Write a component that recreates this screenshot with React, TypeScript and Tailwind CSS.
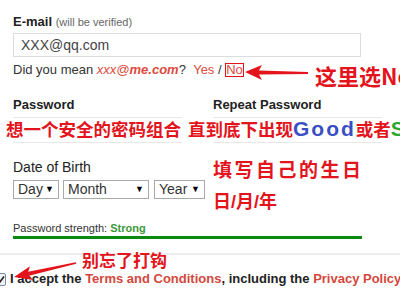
export default function App() {
  return (
    <main className="relative w-[400px] h-[300px] overflow-hidden bg-white font-['Liberation_Sans',Arial,sans-serif] text-[#333]">
      <div className="pl-[13px] pt-[14px]">

        {/* E-mail */}
        <div className="h-[16px] leading-[16px] text-[13px] whitespace-nowrap">
          <span className="font-bold text-[#222]">E-mail</span>{" "}
          <span className="text-[11px] text-[#666]">(will be verified)</span>
        </div>

        <div className="mt-[3px] w-[348px] h-[24px] border border-[#dcdcdc] pl-[7px] flex items-center text-[14px] text-[#444]">
          XXX@qq.com
        </div>

        <div className="mt-[5px] h-[16px] leading-[16px] text-[13px] whitespace-nowrap">
          Did you mean{" "}
          <span className="italic text-[#dd4a40]">
            xxx@<b>me.com</b>
          </span>
          ?&nbsp;&nbsp;<span className="text-[#dd4a40]">Yes</span> /{" "}
          <span className="inline-block border border-[#e3141c] leading-[12px] text-[#dd4a40]">
            No
          </span>
        </div>

        {/* Password */}
        <div className="mt-[19px] grid grid-cols-[200px_200px]">
          <div className="h-[16px] leading-[16px] text-[13px] font-bold text-[#222]">
            Password
          </div>
          <div className="h-[16px] leading-[16px] text-[13px] font-bold text-[#222]">
            Repeat Password
          </div>
        </div>

        <div className="mt-[4px] grid grid-cols-[200px_200px]">
          <div className="w-[169px] h-[26px] border-y border-[#e8e8e8]" />
          <div className="w-[169px] h-[26px] border-y border-[#e8e8e8]" />
        </div>

        {/* Date of Birth */}
        <div className="mt-[16px] h-[17px] leading-[17px] text-[14px] text-[#222]">
          Date of Birth
        </div>

        <div className="mt-[4px] flex gap-[4px] text-[14px] text-[#333]">
          <div className="w-[46px] h-[19px] border border-[#a9a9a9] pl-[4px] pr-[4px] flex items-center justify-between">
            Day
            <span className="text-[9px] text-black">▼</span>
          </div>
          <div className="w-[86px] h-[19px] border border-[#a9a9a9] pl-[4px] pr-[4px] flex items-center justify-between">
            Month
            <span className="text-[9px] text-black">▼</span>
          </div>
          <div className="ml-[1px] w-[51px] h-[19px] border border-[#a9a9a9] pl-[4px] pr-[4px] flex items-center justify-between">
            Year
            <span className="text-[9px] text-black">▼</span>
          </div>
        </div>

        {/* Strength */}
        <div className="mt-[22px] h-[14px] leading-[14px] text-[11px] text-[#333] whitespace-nowrap">
          Password strength:{" "}
          <span className="font-bold text-[#3a9a3a]">Strong</span>
        </div>

        <div className="mt-[1px] w-[349px] h-[3px] bg-[#0b8a12]" />
      </div>

      <div className="mt-[14px] h-[2px] bg-[#ededed]" />

      {/* Terms */}
      <div className="mt-[16px] flex items-center h-[16px] text-[13px] font-bold text-[#222] whitespace-nowrap">
        <div className="ml-[-5px] mr-[4px] w-[13px] h-[13px] rounded-[2px] border border-[#7d8aa6] bg-[#eef1f6] flex items-center justify-center">
          <svg width="9" height="9" viewBox="0 0 9 9">
            <path d="M1 5 L3.5 7.5 L8 1.5" stroke="#222" strokeWidth="1.6" fill="none" />
          </svg>
        </div>
        I accept the&nbsp;
        <span className="text-[#d4473d]">Terms and Conditions</span>
        , including the&nbsp;
        <span className="text-[#d4473d]">Privacy Policy</span>
      </div>

      {/* Annotations */}
      <div className="absolute left-[315px] top-[62px] leading-[26px] text-[22px] font-bold text-[#e3141c] whitespace-nowrap font-['Noto_Sans_CJK_SC',sans-serif]">
        这里选No
      </div>

      <div className="absolute left-[6px] top-[119px] leading-[20px] text-[17.5px] font-bold whitespace-nowrap font-['Noto_Sans_CJK_SC',sans-serif] text-[#e3141c]">
        想一个安全的密码组合
        <span className="ml-[7px]">直到底下出现</span>
        <span className="font-['Liberation_Sans',Arial,sans-serif] text-[21px] tracking-[2px] text-[#3b4fc4]">
          Good
        </span>
        或者
        <span className="font-['Liberation_Sans',Arial,sans-serif] text-[21px] text-[#2aa832]">
          Strong
        </span>
      </div>

      <div className="absolute left-[213px] top-[156px] leading-[26px] text-[19px] tracking-[2.5px] font-bold text-[#e3141c] whitespace-nowrap font-['Noto_Sans_CJK_SC',sans-serif]">
        填写自己的生日
      </div>

      <div className="absolute left-[213px] top-[187px] leading-[26px] text-[18px] font-bold text-[#e3141c] whitespace-nowrap font-['Noto_Sans_CJK_SC',sans-serif]">
        日<span className="font-['Liberation_Sans',Arial,sans-serif]">/</span>月<span className="font-['Liberation_Sans',Arial,sans-serif]">/</span>年
      </div>

      <div className="absolute left-[82px] top-[249px] leading-[22px] text-[17px] font-bold text-[#e3141c] whitespace-nowrap font-['Noto_Sans_CJK_SC',sans-serif]">
        别忘了打钩
      </div>

      <svg className="absolute left-0 top-0 pointer-events-none" width="400" height="300">
        <polygon
          points="245,72 262,65 259,70.5 308,72 308,74 259,74.5 262,80"
          fill="#e3141c"
        />
        <polygon
          points="14,277 30,266.2 28.2,271.7 75.8,262.2 76.2,263.8 29,275.7 33.1,279.9"
          fill="#e3141c"
        />
      </svg>
    </main>
  );
}
